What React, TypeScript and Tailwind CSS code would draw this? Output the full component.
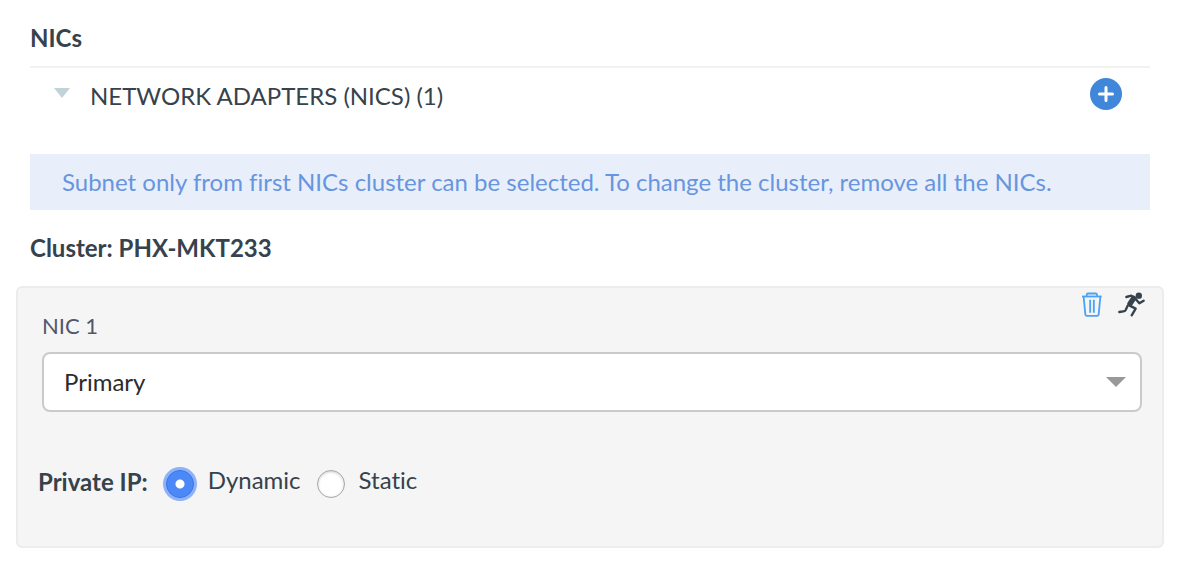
import { useState } from "react";

function TrashIcon() {
  return (
    <svg viewBox="66 34 60 75" className="h-[25px] w-5" fill="none" stroke="#4ba3f5" strokeWidth="5.5" strokeLinejoin="round" aria-hidden="true">
      <path d="M66 47.500H125" />
      <path d="M80 47V43Q80 38.500 84 38.500H107Q111 38.500 111 43V47" />
      <path d="M71 49L76 101Q76.500 105.500 81 105.500H111Q115.500 105.500 116 101L121 49" />
      <path d="M90.500 57V96M101.500 57V96" />
    </svg>
  );
}

function RunnerIcon() {
  return (
    <svg viewBox="174 36 84 75" className="h-[25px] w-7" fill="none" stroke="#36424c" strokeWidth="7" strokeLinecap="round" strokeLinejoin="round" aria-hidden="true">
      <circle cx="236.500" cy="47" r="9.500" fill="#36424c" stroke="none" />
      <path d="M199 51L214 47L224 53" />
      <path d="M221 55L210 71" strokeWidth="16" />
      <path d="M227 57L238 70L251 62" />
      <path d="M209 77L227 86L215 106" />
      <path d="M203 77L197 90Q195 94 190 94L178 96" />
    </svg>
  );
}

const radioClass =
  "size-7 shrink-0 appearance-none rounded-full border border-[#a6a6a6] bg-white shadow-[inset_0_1px_3px_rgba(0,0,0,0.2)] outline-none checked:border-[#3577f0] checked:bg-[#4d88f7] checked:bg-[radial-gradient(circle,#fff_4px,transparent_5px)] checked:shadow-[0_0_0_3px_#8fb1f5]";

export default function App() {
  const [open, setOpen] = useState(true);
  const [mode, setMode] = useState("dynamic");

  return (
    <main className="bg-white pt-6 pr-6 pb-5 pl-4 font-['Lato',sans-serif] text-2xl leading-7 text-[#36424c] [font-variant-ligatures:none]">
      <div className="px-3.5">
        <h1 className="border-b-2 border-[#f2f2f2] pb-3.5 leading-7 font-bold">NICs</h1>
        <div className="flex h-[86px] items-start justify-between pt-2.5 pr-7 pl-6">
          <button type="button" aria-expanded={open} onClick={() => setOpen(!open)} className="flex items-center gap-5 pt-1">
            <svg viewBox="0 0 16 10" className="mb-1.5 h-2.5 w-4" fill="#c1d3d9" aria-hidden="true">
              <path d="M0 0H16L8 10Z" />
            </svg>
            <span className="leading-7">NETWORK ADAPTERS (NICS) (1)</span>
          </button>
          <button type="button" aria-label="Add NIC" className="flex size-8 items-center justify-center rounded-full bg-[#4087d9]">
            <svg viewBox="0 0 16 16" className="size-4" stroke="#fff" strokeWidth="3" strokeLinecap="round" aria-hidden="true">
              <path d="M8 1.500V14.500M1.500 8H14.500" />
            </svg>
          </button>
        </div>
        <p className="bg-[#e8effa] px-8 py-3.5 leading-7 text-[#6795e0]">
          Subnet only from first NICs cluster can be selected. To change the cluster, remove all the NICs.
        </p>
        <h2 className="py-6 font-bold">Cluster: PHX-MKT233</h2>
      </div>

      <section className="rounded-md border-2 border-[#ececec] bg-[#f5f5f5] pb-[46px]">
        <div className="flex items-start justify-between pr-4 pl-6">
          <label htmlFor="nic" className="pt-6 pb-3 text-[22px] leading-7 text-[#4f586b]">NIC 1</label>
          <div className="flex gap-4 pt-1">
            <button type="button" aria-label="Delete NIC"><TrashIcon /></button>
            <button type="button" aria-label="Set as runtime editable"><RunnerIcon /></button>
          </div>
        </div>
        <div className="grid items-center pr-5 pl-6">
          <select id="nic" className="col-start-1 row-start-1 h-[60px] w-full appearance-none rounded-lg border-2 border-[#cacaca] bg-white px-5 text-[#2b2b2b]">
            <option>Primary</option>
          </select>
          <svg viewBox="0 0 20 10" className="pointer-events-none col-start-1 row-start-1 mr-4 h-2.5 w-5 justify-self-end" fill="#999" aria-hidden="true">
            <path d="M0 0H20L10 10Z" />
          </svg>
        </div>
        <fieldset className="px-5 pt-14">
          <div className="flex h-8 items-center">
            <legend className="mr-4.5 pb-1 font-bold">Private IP:</legend>
            <label className="mr-4 flex items-center gap-3.5">
              <input type="radio" name="ip" className={radioClass} checked={mode === "dynamic"} onChange={() => setMode("dynamic")} />
              <span className="pb-2">Dynamic</span>
            </label>
            <label className="flex items-center gap-3.5">
              <input type="radio" name="ip" className={radioClass} checked={mode === "static"} onChange={() => setMode("static")} />
              <span className="pb-2">Static</span>
            </label>
          </div>
        </fieldset>
      </section>
    </main>
  );
}
